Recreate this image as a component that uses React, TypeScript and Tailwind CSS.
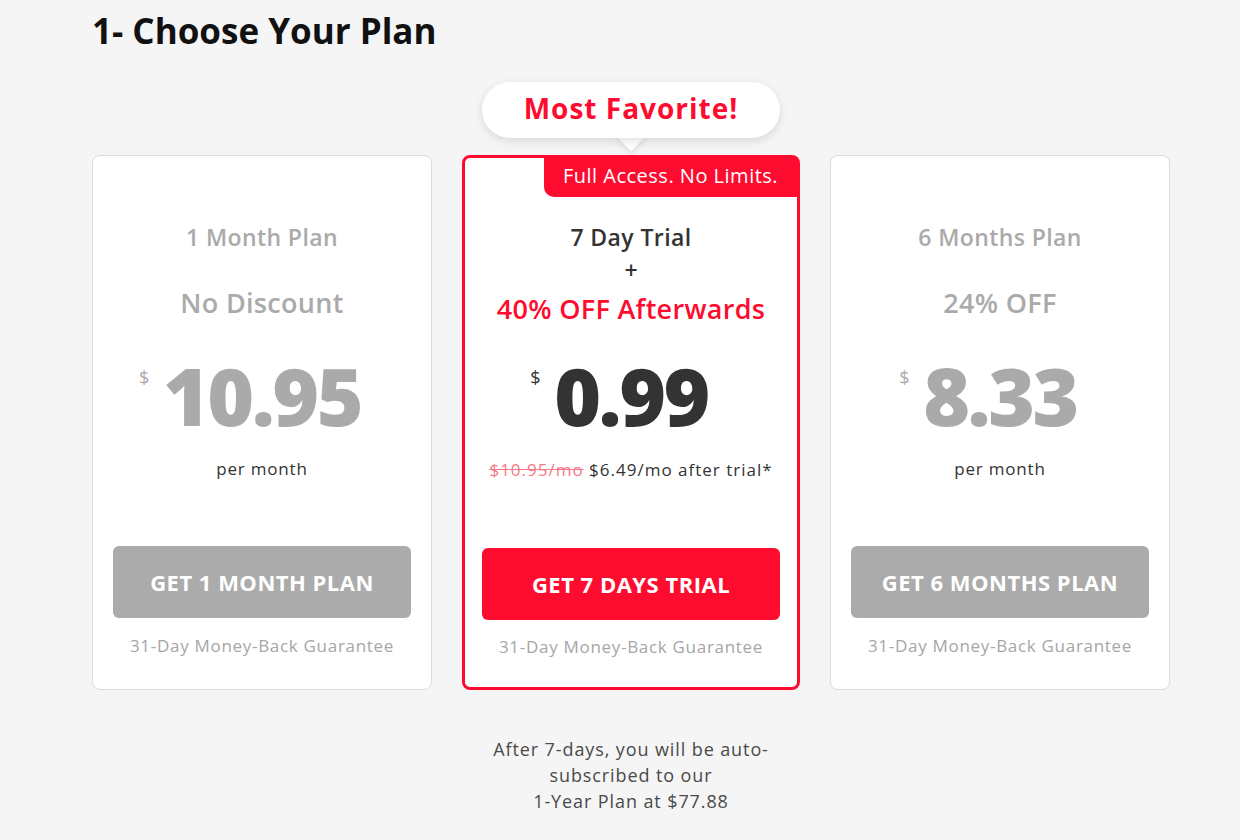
import type { ReactNode } from "react";

const font = { fontFamily: "'Open Sans', Lato, sans-serif" };

type PriceProps = { amount: string; dark?: boolean };

function Price({ amount, dark }: PriceProps) {
  const color = dark ? "text-[#333333]" : "text-[#aaaaaa]";
  return (
    <div className={`flex justify-center h-[80px] ${color}`}>
      <div className="relative">
        <span className="absolute left-[-24px] top-[13px] text-[18px] leading-none">$</span>
        <span className="text-[80px] font-extrabold leading-[80px] tracking-[-2.5px]">{amount}</span>
      </div>
    </div>
  );
}

function Guarantee() {
  return (
    <div className="text-[17px] leading-[24px] tracking-[0.7px] text-[#a6a6a6] text-center">
      31-Day Money-Back Guarantee
    </div>
  );
}

type PlanProps = {
  name: string;
  discount: string;
  amount: string;
  cta: string;
};

function PlanCard({ name, discount, amount, cta }: PlanProps) {
  return (
    <div className="w-[340px] bg-white border border-[#dddddd] rounded-[8px] flex flex-col px-[20px] pt-[66px] pb-[31px] text-center">
      <div className="text-[23px] font-semibold leading-[30px] tracking-[0.4px] text-[#aaaaaa]">{name}</div>
      <div className="mt-[33px] text-[27px] font-semibold leading-[36px] tracking-[0.3px] text-[#aaaaaa]">{discount}</div>
      <div className="mt-[34px]">
        <Price amount={amount} />
      </div>
      <div className="mt-[22px] text-[17px] leading-[24px] tracking-[0.8px] text-[#333333]">per month</div>
      <button className="mt-[65px] h-[72px] w-full rounded-[6px] bg-[#ababab] text-white text-[22px] font-bold tracking-[0.5px]">
        {cta}
      </button>
      <div className="mt-[16px]">
        <Guarantee />
      </div>
    </div>
  );
}

function FavoriteBubble({ children }: { children: ReactNode }) {
  return (
    <div className="absolute left-1/2 -translate-x-1/2 top-[-76px] w-[298px] h-[56px]">
      <div className="absolute left-1/2 -translate-x-1/2 bottom-[-9px] w-[20px] h-[20px] rotate-45 bg-white shadow-[2px_2px_6px_rgba(0,0,0,0.10)]" />
      <div className="relative h-full rounded-full bg-white shadow-[0_3px_10px_rgba(0,0,0,0.12)] flex items-center justify-center text-[28px] font-bold tracking-[1px] text-[#fe0c2f] pb-[4px]">
        {children}
      </div>
    </div>
  );
}

function TrialCard() {
  return (
    <div className="relative w-[338px] bg-white border-[3px] border-[#fe0c2f] rounded-[8px] flex flex-col px-[17px] pt-[64px] pb-[28px] text-center">
      <FavoriteBubble>Most Favorite!</FavoriteBubble>
      <div className="absolute top-0 right-0 h-[39px] w-[253px] bg-[#fe0c2f] rounded-bl-[10px] text-white text-[20px] tracking-[0.5px] flex items-center justify-center pb-[3px]">
        Full Access. No Limits.
      </div>
      <div className="text-[23px] font-semibold leading-[30px] tracking-[0.4px] text-[#333333]">7 Day Trial</div>
      <div className="mt-[3px] text-[23px] font-semibold leading-[30px] text-[#333333]">+</div>
      <div className="mt-[6px] text-[27px] font-semibold leading-[36px] tracking-[0.3px] text-[#fe0c2f]">40% OFF Afterwards</div>
      <div className="mt-[28px]">
        <Price amount="0.99" dark />
      </div>
      <div className="mt-[23px] text-[17px] leading-[24px] tracking-[1px] text-[#333333]">
        <span className="line-through text-[#f57a85]">$10.95/mo</span> $6.49/mo after trial*
      </div>
      <button className="mt-[66px] h-[72px] w-full rounded-[6px] bg-[#fe0c2f] text-white text-[22px] font-bold tracking-[0.5px]">
        GET 7 DAYS TRIAL
      </button>
      <div className="mt-[15px]">
        <Guarantee />
      </div>
    </div>
  );
}

export default function App() {
  return (
    <div className="w-[1240px] h-[840px] bg-[#f5f5f5] overflow-hidden" style={font}>
      <div className="pl-[92px] pt-[8px]">
        <h1 className="text-[35px] font-bold leading-[46px] text-[#111111]">1- Choose Your Plan</h1>
        <div className="mt-[101px] flex gap-[30px]">
          <PlanCard name="1 Month Plan" discount="No Discount" amount="10.95" cta="GET 1 MONTH PLAN" />
          <TrialCard />
          <PlanCard name="6 Months Plan" discount="24% OFF" amount="8.33" cta="GET 6 MONTHS PLAN" />
        </div>
        <div className="w-[1078px] mt-[46px] text-center text-[18px] leading-[26px] tracking-[0.9px] text-[#4a4a4a]">
          After 7-days, you will be auto-
          <br />
          subscribed to our
          <br />
          1-Year Plan at $77.88
        </div>
      </div>
    </div>
  );
}
